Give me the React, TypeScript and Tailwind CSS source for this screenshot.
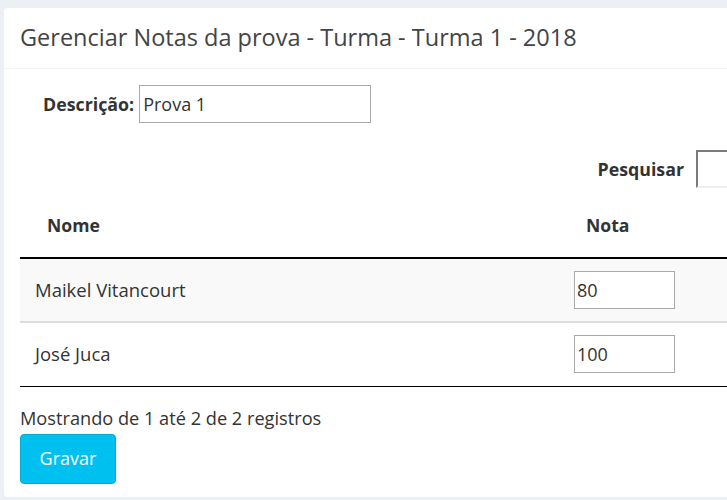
import { useState } from 'react'

const alunos = [
  { nome: 'Maikel Vitancourt', nota: '80' },
  { nome: 'José Juca', nota: '100' },
]

export default function App() {
  const [descricao, setDescricao] = useState('Prova 1')
  const [notas, setNotas] = useState(alunos.map((a) => a.nota))

  return (
    <div
      className="h-[500px] w-[727px] overflow-hidden bg-[#ecf0f5] pl-[4px] pt-[8px] text-[#333]"
      style={{ fontFamily: "'Source Sans Pro', 'Open Sans', 'Liberation Sans', sans-serif" }}
    >
      <div className="w-[900px] rounded-[4px] bg-white pb-[13px]">
        <div className="border-b border-[#f4f4f4] px-[16px] pt-[11px] pb-[13px]">
          <h3 className="text-[23.5px] leading-[36px] text-[#444]">Gerenciar Notas da prova - Turma - Turma 1 - 2018</h3>
        </div>

        <div className="px-[16px]">
          <div className="mt-[16px] flex items-center pl-[23px]">
            <label className="mr-[5px] text-[17.8px] font-bold">Descrição:</label>
            <input
              value={descricao}
              onChange={(e) => setDescricao(e.target.value)}
              className="h-[38px] w-[232px] border border-[#a9a9a9] bg-white px-[3px] text-[18px] outline-none"
            />
          </div>

          <div className="w-[860px]">
            <div className="mt-[27px] flex items-center justify-end">
              <label className="mr-[12px] text-[17.8px] font-bold">Pesquisar</label>
              <input className="h-[38px] w-[184px] border-2 border-t-[#7a7a7a] border-l-[#7a7a7a] border-r-[#eee] border-b-[#eee] bg-white outline-none" />
            </div>

            <table className="mt-[6px] w-full border-collapse text-[18.5px]">
              <thead>
                <tr className="border-b-2 border-black text-[17.6px]">
                  <th className="h-[64px] pl-[27px] text-left font-bold">Nome</th>
                  <th className="w-[306px] pl-[12px] text-left font-bold">Nota</th>
                </tr>
              </thead>
              <tbody>
                {alunos.map((a, i) => (
                  <tr
                    key={a.nome}
                    className={i === 0 ? 'border-b-2 border-[#ddd] bg-[#f9f9f9]' : 'border-b border-black'}
                  >
                    <td className="h-[64px] pl-[15px]">{a.nome}</td>
                    <td className="pl-0">
                      <input
                        value={notas[i]}
                        onChange={(e) => setNotas(notas.map((n, j) => (j === i ? e.target.value : n)))}
                        className="h-[38px] w-[101px] border border-[#a9a9a9] bg-white px-[2px] text-[18px] outline-none"
                      />
                    </td>
                  </tr>
                ))}
              </tbody>
            </table>
          </div>

          <div className="mt-[19px] text-[18.2px] leading-[25px]">Mostrando de 1 até 2 de 2 registros</div>
          <button className="mt-[3px] h-[50px] w-[96px] rounded-[4px] border border-[#00acd6] bg-[#00c0ef] text-[18px] text-white">
            Gravar
          </button>
        </div>
      </div>
    </div>
  )
}
